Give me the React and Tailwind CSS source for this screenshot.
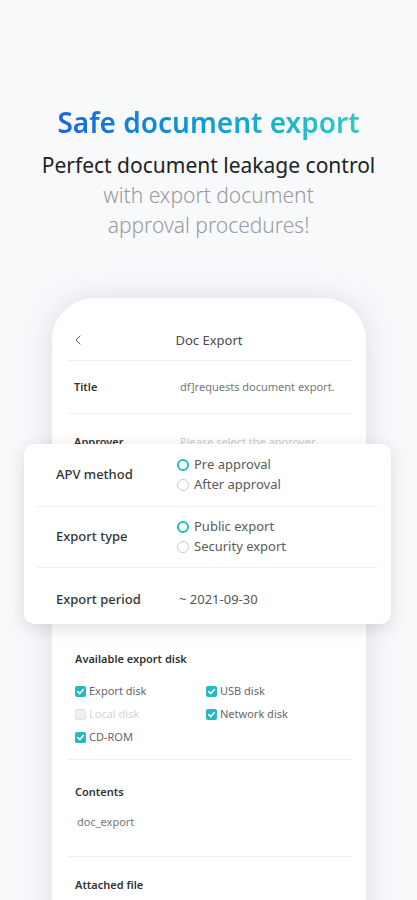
import { ChevronLeft } from 'lucide-react';

const font = { fontFamily: '"Noto Sans", "Open Sans", sans-serif' };

function Radio({ checked, label }) {
  return (
    <div className="flex items-center gap-[5px] h-[20px]">
      {checked ? (
        <span className="w-[12px] h-[12px] rounded-full border-[2.5px] border-[#22bcc4] bg-white" />
      ) : (
        <span className="w-[12px] h-[12px] rounded-full border border-[#c9c9c9] bg-white" />
      )}
      <span className="text-[13px] text-[#5a5a5a]">{label}</span>
    </div>
  );
}

function Check({ checked = true, disabled, label }) {
  return (
    <div className="flex items-center gap-[3px] h-[23px]">
      {disabled ? (
        <span className="w-[11px] h-[11px] rounded-[2px] bg-[#efefef] border border-[#e2e2e2]" />
      ) : (
        <span className="w-[11px] h-[11px] rounded-[2px] bg-[#27b9c3] flex items-center justify-center">
          {checked && (
            <svg width="9" height="9" viewBox="0 0 10 10" fill="none">
              <path d="M2 5.2 4.2 7.3 8.2 2.8" stroke="white" strokeWidth="1.8" strokeLinecap="round" strokeLinejoin="round" />
            </svg>
          )}
        </span>
      )}
      <span className={`text-[11px] ${disabled ? 'text-[#d4d4d4]' : 'text-[#666]'}`}>{label}</span>
    </div>
  );
}

export default function App() {
  return (
    <div className="w-full h-[900px] overflow-hidden bg-[#f8f9fb]" style={font}>
      <div className="pt-[104px] text-center">
        <h1 className="inline-block text-[28px] leading-[36px] font-semibold bg-gradient-to-r from-[#1b63df] to-[#30cbc2] bg-clip-text text-transparent">
          Safe document export
        </h1>
        <div className="mt-[10px] text-[21px] leading-[30px]">
          <p className="text-[#222]">Perfect document leakage control</p>
          <p className="text-[#9a9a9a] font-light">with export document</p>
          <p className="text-[#9a9a9a] font-light">approval procedures!</p>
        </div>
      </div>

      <div className="mt-[58px] ml-[52px] w-[314px] h-[700px] bg-white rounded-t-[42px] shadow-[0_0_28px_rgba(140,150,170,0.28)] px-[15px]">
        <div className="relative flex items-center justify-center pt-[34px] pb-[12px] border-b border-[#f0f0f0]">
          <ChevronLeft size={16} strokeWidth={1.5} className="absolute left-[3px] bottom-[12px] text-[#555]" />
          <span className="text-[13px] leading-[16px] text-[#4a4a4a]">Doc Export</span>
        </div>

        <div className="flex items-center h-[53px] border-b border-[#f0f0f0] text-[11px]">
          <span className="w-[113px] pl-[7px] font-semibold text-[#333]">Title</span>
          <span className="text-[#777]">df]requests document export.</span>
        </div>

        <div className="flex items-center h-[56px] text-[11px]">
          <span className="w-[113px] pl-[7px] font-semibold text-[#333]">Approver</span>
          <span className="text-[#ccc]">Please select the approver.</span>
        </div>

        <div className="relative -mt-[26px] -ml-[43px] w-[367px] bg-white rounded-[10px] shadow-[0_4px_18px_rgba(0,0,0,0.13)] px-[13px]">
          <div className="flex items-center h-[63px] border-b border-[#f0f0f0]">
            <span className="w-[140px] pl-[19px] text-[13px] font-medium text-[#333]">APV method</span>
            <div className="flex flex-col">
              <Radio checked label="Pre approval" />
              <Radio label="After approval" />
            </div>
          </div>
          <div className="flex items-center h-[61px] border-b border-[#f0f0f0]">
            <span className="w-[140px] pl-[19px] text-[13px] font-medium text-[#333]">Export type</span>
            <div className="flex flex-col">
              <Radio checked label="Public export" />
              <Radio label="Security export" />
            </div>
          </div>
          <div className="flex items-center h-[56px] pt-[8px]">
            <span className="w-[142px] pl-[19px] text-[13px] font-medium text-[#333]">Export period</span>
            <span className="text-[13px] text-[#555]">~ 2021-09-30</span>
          </div>
        </div>

        <div className="pl-[8px] pt-[27px] pb-[10px] border-b border-[#f0f0f0]">
          <p className="text-[11px] leading-[16px] font-semibold text-[#333]">Available export disk</p>
          <div className="mt-[13px] grid grid-cols-[131px_1fr]">
            <Check label="Export disk" />
            <Check label="USB disk" />
            <Check disabled label="Local disk" />
            <Check label="Network disk" />
            <Check label="CD-ROM" />
          </div>
        </div>

        <div className="pl-[8px] pt-[24px] pb-[26px] border-b border-[#f0f0f0]">
          <p className="text-[11px] leading-[16px] font-semibold text-[#333]">Contents</p>
          <p className="mt-[14px] pl-[2px] text-[11px] leading-[16px] text-[#777]">doc_export</p>
        </div>

        <div className="pl-[8px] pt-[20px]">
          <p className="text-[11px] leading-[16px] font-semibold text-[#333]">Attached file</p>
        </div>
      </div>
    </div>
  );
}
